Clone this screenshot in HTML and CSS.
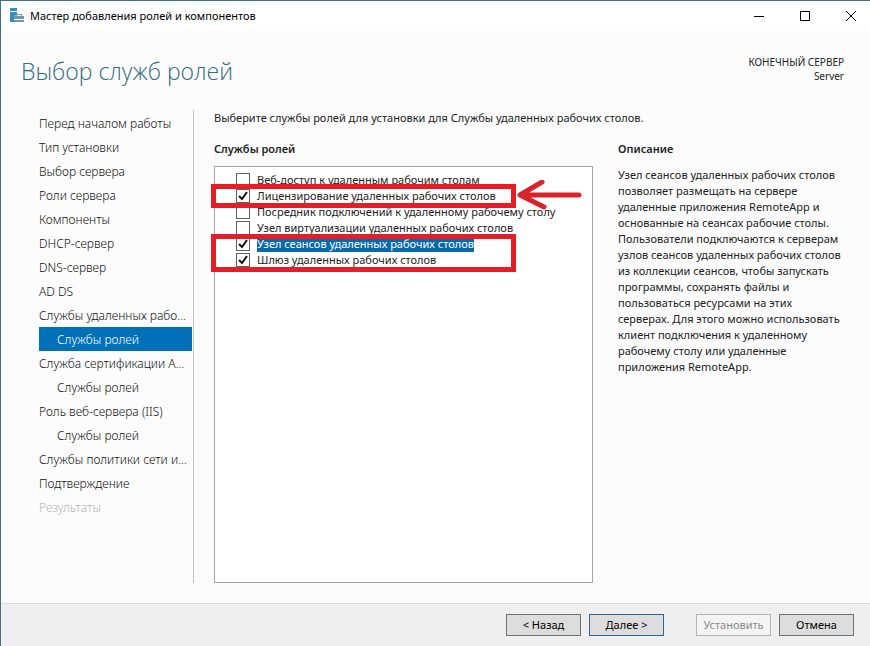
FILE: index.html
```
<!DOCTYPE html>
<html lang="ru">
<head>
  <meta charset="UTF-8">
  <title>Мастер добавления ролей и компонентов</title>
  <link rel="stylesheet" href="styles.css">
</head>
<body>
  <div class="window">
    <div class="titlebar">
      <svg class="app-icon" width="16" height="16" viewBox="0 0 16 16">
        <path fill="#3a8cc4" d="M1 0h7v3H1zM1 4h7v2L6 8H5v6H1z"/>
        <path fill="none" stroke="#7596a8" d="M7.500 8.500V6.500h5v2"/>
        <path fill="#7596a8" d="M5 8h10v3H5zM5 12h10v2H5z"/>
      </svg>
      <span class="caption">Мастер добавления ролей и компонентов</span>
      <div class="window-buttons">
        <button type="button" aria-label="Свернуть"><svg width="12" height="12"><path d="M1 6.500h10"/></svg></button>
        <button type="button" aria-label="Развернуть"><svg width="12" height="12"><path d="M1.500 1.500h9v9h-9z"/></svg></button>
        <button type="button" aria-label="Закрыть"><svg width="12" height="12"><path d="M1 1l10 10M11 1L1 11"/></svg></button>
      </div>
    </div>

    <header class="header">
      <h1>Выбор служб ролей</h1>
      <div class="server">КОНЕЧНЫЙ СЕРВЕР<br>Server</div>
    </header>

    <div class="content">
      <nav class="steps">
        <a href="#">Перед началом работы</a>
        <a href="#">Тип установки</a>
        <a href="#">Выбор сервера</a>
        <a href="#">Роли сервера</a>
        <a href="#">Компоненты</a>
        <a href="#">DHCP-сервер</a>
        <a href="#">DNS-сервер</a>
        <a href="#">AD DS</a>
        <a href="#">Службы удаленных рабо...</a>
        <a href="#" class="sub active">Службы ролей</a>
        <a href="#">Служба сертификации A...</a>
        <a href="#" class="sub">Службы ролей</a>
        <a href="#">Роль веб-сервера (IIS)</a>
        <a href="#" class="sub">Службы ролей</a>
        <a href="#">Службы политики сети и...</a>
        <a href="#">Подтверждение</a>
        <a class="disabled">Результаты</a>
      </nav>

      <main class="main">
        <p class="intro">Выберите службы ролей для установки для Службы удаленных рабочих столов.</p>
        <section class="roles">
          <h2>Службы ролей</h2>
          <div class="list">
            <label><input type="checkbox"><span>Веб-доступ к удаленным рабочим столам</span></label>
            <label><input type="checkbox" checked><span>Лицензирование удаленных рабочих столов</span></label>
            <label><input type="checkbox"><span>Посредник подключений к удаленному рабочему столу</span></label>
            <label><input type="checkbox"><span>Узел виртуализации удаленных рабочих столов</span></label>
            <label class="selected"><input type="checkbox" checked><span>Узел сеансов удаленных рабочих столов</span></label>
            <label><input type="checkbox" checked><span>Шлюз удаленных рабочих столов</span></label>
            <div class="mark mark-one"></div>
            <div class="mark mark-two"></div>
            <svg class="arrow" width="68" height="32" viewBox="0 0 68 32">
              <path d="M64 15H6M27 2L5 15l24 12"/>
            </svg>
          </div>
        </section>
        <section class="description">
          <h2>Описание</h2>
          <p>
            Узел сеансов удаленных рабочих столов<br>
            позволяет размещать на сервере<br>
            удаленные приложения RemoteApp и<br>
            основанные на сеансах рабочие столы.<br>
            Пользователи подключаются к серверам<br>
            узлов сеансов удаленных рабочих столов<br>
            из коллекции сеансов, чтобы запускать<br>
            программы, сохранять файлы и<br>
            пользоваться ресурсами на этих<br>
            серверах. Для этого можно использовать<br>
            клиент подключения к удаленному<br>
            рабочему столу или удаленные<br>
            приложения RemoteApp.
          </p>
        </section>
      </main>
    </div>

    <footer class="footer">
      <button type="button">&lt; Назад</button>
      <button type="button" class="primary">Далее &gt;</button>
      <button type="button" class="install" disabled>Установить</button>
      <button type="button">Отмена</button>
    </footer>
  </div>
</body>
</html>
```
FILE: styles.css
```
* {
  box-sizing: border-box;
}
body {
  margin: 0;
  font-family: "Noto Sans", "Open Sans", sans-serif;
  font-size: 11px;
  line-height: 16px;
  color: #222;
}
h1, h2, p {
  margin: 0;
}
.window {
  display: flex;
  flex-direction: column;
  min-height: 100vh;
  background-color: #fcfcfc;
  border-top: 1px solid #3f7389;
  border-left: 1px solid #3f7389;
}

/* title bar */
.titlebar {
  display: flex;
  align-items: center;
  height: 30px;
  padding-left: 8px;
  background-color: #fff;
  color: #000;
}
.caption {
  flex: 1;
  margin-left: 5px;
  white-space: nowrap;
}
.window-buttons {
  display: flex;
}
.window-buttons button {
  display: flex;
  align-items: center;
  justify-content: center;
  width: 46px;
  height: 28px;
  padding: 0;
  border: none;
  background: none;
}
.window-buttons button:last-child {
  width: 38px;
  margin-left: 4px;
}
.window-buttons svg {
  fill: none;
  stroke: #000;
}

.header {
  display: flex;
  justify-content: space-between;
  height: 79px;
  padding: 24px 26px 0 20px;
}
h1 {
  font-family: "Open Sans", sans-serif;
  font-size: 23px;
  font-weight: 300;
  line-height: 32px;
  color: #2b6c85;
}
.server {
  font-size: 10px;
  line-height: 14px;
  text-align: right;
  color: #222;
}

.content {
  display: flex;
  flex: 1;
  padding-bottom: 20px;
}

/* wizard steps */
.steps {
  width: 155px;
  margin-left: 38px;
  padding: 1px 1px 0 0;
  border-right: 1px solid #c4c4c4;
}
.steps a {
  display: block;
  height: 24px;
  font-size: 12px;
  font-weight: 300;
  line-height: 26px;
  color: #111;
  text-decoration: none;
  white-space: nowrap;
}
.steps .sub {
  padding-left: 18px;
}
.steps .active {
  background-color: #0071b8;
  color: #fff;
}
.steps .disabled {
  color: #b4b4b4;
}

.main {
  display: grid;
  flex: 1;
  grid-template-columns: 379px 1fr;
  grid-template-rows: auto 1fr;
  column-gap: 25px;
  padding-left: 20px;
}
.intro {
  grid-column: 1 / 3;
}
.roles,
.description {
  display: flex;
  flex-direction: column;
  padding-top: 15px;
}
h2 {
  font-size: 11px;
  font-weight: 600;
  line-height: 16px;
}
.description p {
  margin-top: 10px;
  white-space: nowrap;
}

.list {
  position: relative;
  flex: 1;
  margin-top: 9px;
  padding: 5px 0 5px 21px;
  border: 1px solid #a5a5a5;
  background-color: #fff;
}
.list label {
  display: flex;
  align-items: center;
  height: 16px;
  white-space: nowrap;
}
.list input {
  appearance: none;
  width: 14px;
  height: 14px;
  margin: 0 7px 0 0;
  border: 1px solid #606060;
  background-color: #fff;
}
.list input:checked {
  background-image: url("data:image/svg+xml,%3Csvg xmlns='http://www.w3.org/2000/svg' viewBox='0 0 12 12'%3E%3Cpath d='M2 6l3 3 5-7' fill='none' stroke='%23111' stroke-width='2'/%3E%3C/svg%3E");
}
.list .selected span {
  background-color: #0a6aa8;
  color: #fff;
}

/* red marks over the list */
.mark {
  position: absolute;
  left: -4px;
  width: 305px;
  border: 5px solid #e81c24;
}
.mark-one {
  top: 17px;
  height: 24px;
}
.mark-two {
  top: 67px;
  height: 38px;
}
.arrow {
  position: absolute;
  top: 13px;
  left: 300px;
  fill: none;
  stroke: #d8232d;
  stroke-width: 5;
  stroke-linecap: round;
  stroke-linejoin: round;
}

.footer {
  display: flex;
  justify-content: flex-end;
  gap: 8px;
  height: 43px;
  padding: 10px 16px 0 0;
  border-top: 1px solid #d8d8d8;
  background-color: #efefef;
}
.footer button {
  width: 75px;
  height: 22px;
  padding: 0;
  border: 1px solid #707070;
  background-color: #ddd;
  font: inherit;
  line-height: 20px;
  color: #000;
}
.footer .primary {
  border-color: #2a6a9a;
}
.footer .install {
  margin-left: 24px;
  border-color: #b4b4b4;
  background-color: #f4f4f4;
  color: #8a8a8a;
}
```
